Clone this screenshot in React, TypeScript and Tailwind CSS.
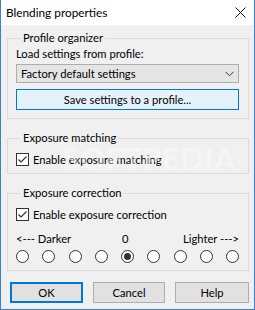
import React, { useState } from 'react';

const font = { fontFamily: 'Lato, "Noto Sans", sans-serif' };

const CheckBox: React.FC<{ checked: boolean; onChange: () => void; label: string }> = ({ checked, onChange, label }) => (
  <label className="flex items-center gap-[4px] h-[13px] cursor-default select-none" onClick={onChange}>
    <span className="w-[13px] h-[13px] bg-white border border-[#333] flex items-center justify-center">
      {checked && (
        <svg width="11" height="11" viewBox="0 0 11 11">
          <polyline points="1.5,5.5 4,8 9.5,2.5" fill="none" stroke="#333" strokeWidth="1.2" />
        </svg>
      )}
    </span>
    <span>{label}</span>
  </label>
);

const Radio: React.FC<{ checked: boolean; onClick: () => void }> = ({ checked, onClick }) => (
  <button
    onClick={onClick}
    className="w-[13px] h-[13px] rounded-full bg-white border border-[#333] flex items-center justify-center"
  >
    {checked && <span className="w-[7px] h-[7px] rounded-full bg-[#333]" />}
  </button>
);

const Group: React.FC<{ title: string; className?: string; children: React.ReactNode }> = ({ title, className, children }) => (
  <fieldset className={`border border-[#dcdcdc] mx-0 ${className ?? ''}`}>
    <legend className="ml-[5px] px-[2px] h-[16px] leading-[16px]">{title}</legend>
    {children}
  </fieldset>
);

export default function App() {
  const [matching, setMatching] = useState(true);
  const [correction, setCorrection] = useState(true);
  const [level, setLevel] = useState(4);

  return (
    <div style={font} className="w-[255px] h-[310px] flex flex-col bg-[#f0f0f0] text-[11.2px] leading-[15px] text-black border-x border-b border-[#3b7fd4] relative overflow-hidden">
      {/* Title bar */}
      <div className="h-[25px] bg-white flex items-center justify-between pl-[5px] pr-[8px] shrink-0">
        <span className="text-[11.8px] leading-[16px]">Blending properties</span>
        <svg width="11" height="11" viewBox="0 0 11 11">
          <path d="M0.5 0.5 L10.5 10.5 M10.5 0.5 L0.5 10.5" stroke="#111" strokeWidth="1" />
        </svg>
      </div>

      <div className="flex flex-col pl-[6px] pr-[5px] pt-[5px]">
        <Group title="Profile organizer" className="pl-[8px] pr-[9px] pb-[8px]">
          <div className="h-[15px]">Load settings from profile:</div>
          <div className="mt-[3px] h-[19px] bg-[#e5e5e5] border border-[#adadad] flex items-center justify-between pl-[4px] pr-[4px]">
            <span>Factory default settings</span>
            <svg width="9" height="6" viewBox="0 0 9 6">
              <polyline points="0.5,0.8 4.5,4.8 8.5,0.8" fill="none" stroke="#333" strokeWidth="1" />
            </svg>
          </div>
          <button className="mt-[6px] w-full h-[21px] bg-[#e5f1fb] border border-[#0078d7] flex items-center justify-center">
            Save settings to a profile...
          </button>
        </Group>

        <Group title="Exposure matching" className="mt-[11px] pl-[8px] pr-[9px] pb-[7px]">
          <div className="mt-[7px]">
            <CheckBox checked={matching} onChange={() => setMatching(!matching)} label="Enable exposure matching" />
          </div>
        </Group>

        <Group title="Exposure correction" className="mt-[11px] pl-[8px] pr-[9px] pb-[7px]">
          <div className="mt-[7px]">
            <CheckBox checked={correction} onChange={() => setCorrection(!correction)} label="Enable exposure correction" />
          </div>
          <div className="mt-[10px] h-[15px] flex">
            <span className="w-[106px]">&lt;--- Darker</span>
            <span>0</span>
            <span className="ml-auto">Lighter ---&gt;</span>
          </div>
          <div className="mt-[4px] flex justify-between">
            {Array.from({ length: 9 }).map((_, i) => (
              <Radio key={i} checked={level === i} onClick={() => setLevel(i)} />
            ))}
          </div>
        </Group>
      </div>

      <div className="mt-[11px] flex gap-[10px] pl-[9px]">
        <button className="w-[73px] h-[21px] bg-[#e1e1e1] border-2 border-[#0078d7]">OK</button>
        <button className="w-[72px] h-[21px] bg-[#e1e1e1] border border-[#adadad]">Cancel</button>
        <button className="w-[74px] h-[21px] bg-[#e1e1e1] border border-[#adadad]">Help</button>
      </div>

      {/* watermark */}
      <div className="absolute left-[62px] top-[140px] text-[30px] leading-[36px] font-bold tracking-[1px] text-white/40 pointer-events-none select-none">
        SOFTPEDIA<sup className="text-[10px]">®</sup>
      </div>
    </div>
  );
}
